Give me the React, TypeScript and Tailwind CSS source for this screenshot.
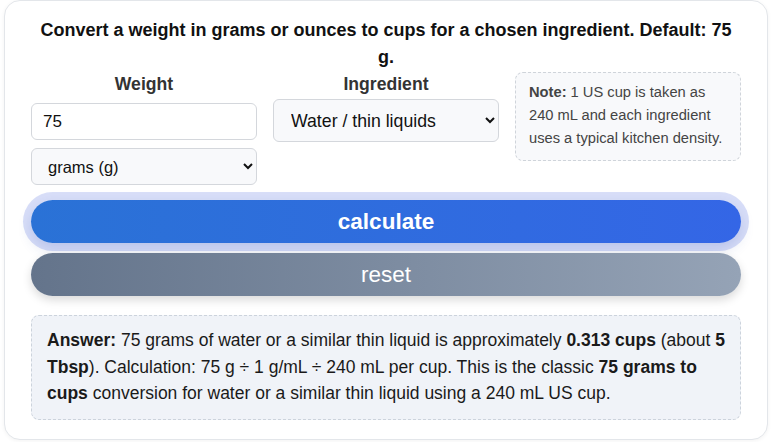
export default function App() {
  return (
    <div className="px-1 pt-0 pb-0.5 font-['Liberation_Sans',Arial,sans-serif]">
      <div className="rounded-2xl border border-[#e3e6ea] bg-white px-[26px] pt-[16px] pb-[19px] shadow-[0_1px_4px_rgba(0,0,0,0.05)]">
        <p className="text-center text-[18px] leading-[27px] font-bold text-[#111]">
          Convert a <strong className="font-extrabold">weight</strong> in grams or ounces to{' '}
          <strong className="font-extrabold">cups</strong> for a chosen ingredient. Default:{' '}
          <strong className="font-extrabold">75 g</strong>.
        </p>

        <div className="mt-[1px] grid grid-cols-3 items-start gap-x-[16px]">
          <div className="flex flex-col">
            <label className="text-center text-[17.6px] leading-[24px] font-bold text-[#333]">Weight</label>
            <input
              defaultValue="75"
              className="mt-[7px] h-[37px] rounded-md border border-[#d4d7dc] bg-white px-[11px] text-[17px] text-[#111] outline-none"
            />
            <select className="mt-[8px] h-[37px] rounded-md border border-[#d4d7dc] bg-[#f8f9fb] px-[12px] text-[16.5px] text-[#111]">
              <option>grams (g)</option>
              <option>ounces (oz)</option>
            </select>
          </div>

          <div className="flex flex-col">
            <label className="text-center text-[17.6px] leading-[24px] font-bold text-[#333]">Ingredient</label>
            <select className="mt-[3px] h-[43px] rounded-md border border-[#d4d7dc] bg-[#f8f9fb] px-[13px] text-[17.7px] text-[#111]">
              <option>Water / thin liquids</option>
              <option>All-purpose flour</option>
              <option>Granulated sugar</option>
            </select>
          </div>

          <div className="rounded-lg border border-dashed border-[#cfd4da] bg-[#f8f9fb] px-[13px] pt-[8px] pb-[10px] text-[14.7px] leading-[23px] text-[#444]">
            <strong className="font-bold">Note:</strong> 1 US cup is taken as 240 mL and each ingredient uses a typical
            kitchen density.
          </div>
        </div>

        <div className="mt-[15px] flex flex-col gap-[10px]">
          <button className="h-[43px] w-full rounded-full bg-gradient-to-r from-[#2a72d6] to-[#3466e6] text-[22.5px] font-bold text-white shadow-[0_0_0_8px_rgba(59,92,220,0.2),0_6px_14px_rgba(40,70,160,0.18)]">
            calculate
          </button>
          <button className="h-[43px] w-full rounded-full bg-gradient-to-r from-[#64748b] to-[#95a3b6] text-[22.5px] text-white shadow-[0_4px_10px_rgba(0,0,0,0.15)]">
            reset
          </button>
        </div>

        <div className="mt-[19px] rounded-lg border border-dashed border-[#ccd3dc] bg-[#f0f3f8] px-[15px] pt-[11px] pb-[12px] text-[17.5px] leading-[26.5px] text-[#1a1a1a]">
          <strong className="font-bold">Answer:</strong> 75 grams of water or a similar thin liquid is approximately{' '}
          <strong className="font-bold">0.313 cups</strong> (about <strong className="font-bold">5 Tbsp</strong>).
          Calculation: 75 g ÷ 1 g/mL ÷ 240 mL per cup. This is the classic{' '}
          <strong className="font-bold">75 grams to cups</strong> conversion for water or a similar thin liquid using a
          240 mL US cup.
        </div>
      </div>
    </div>
  )
}
